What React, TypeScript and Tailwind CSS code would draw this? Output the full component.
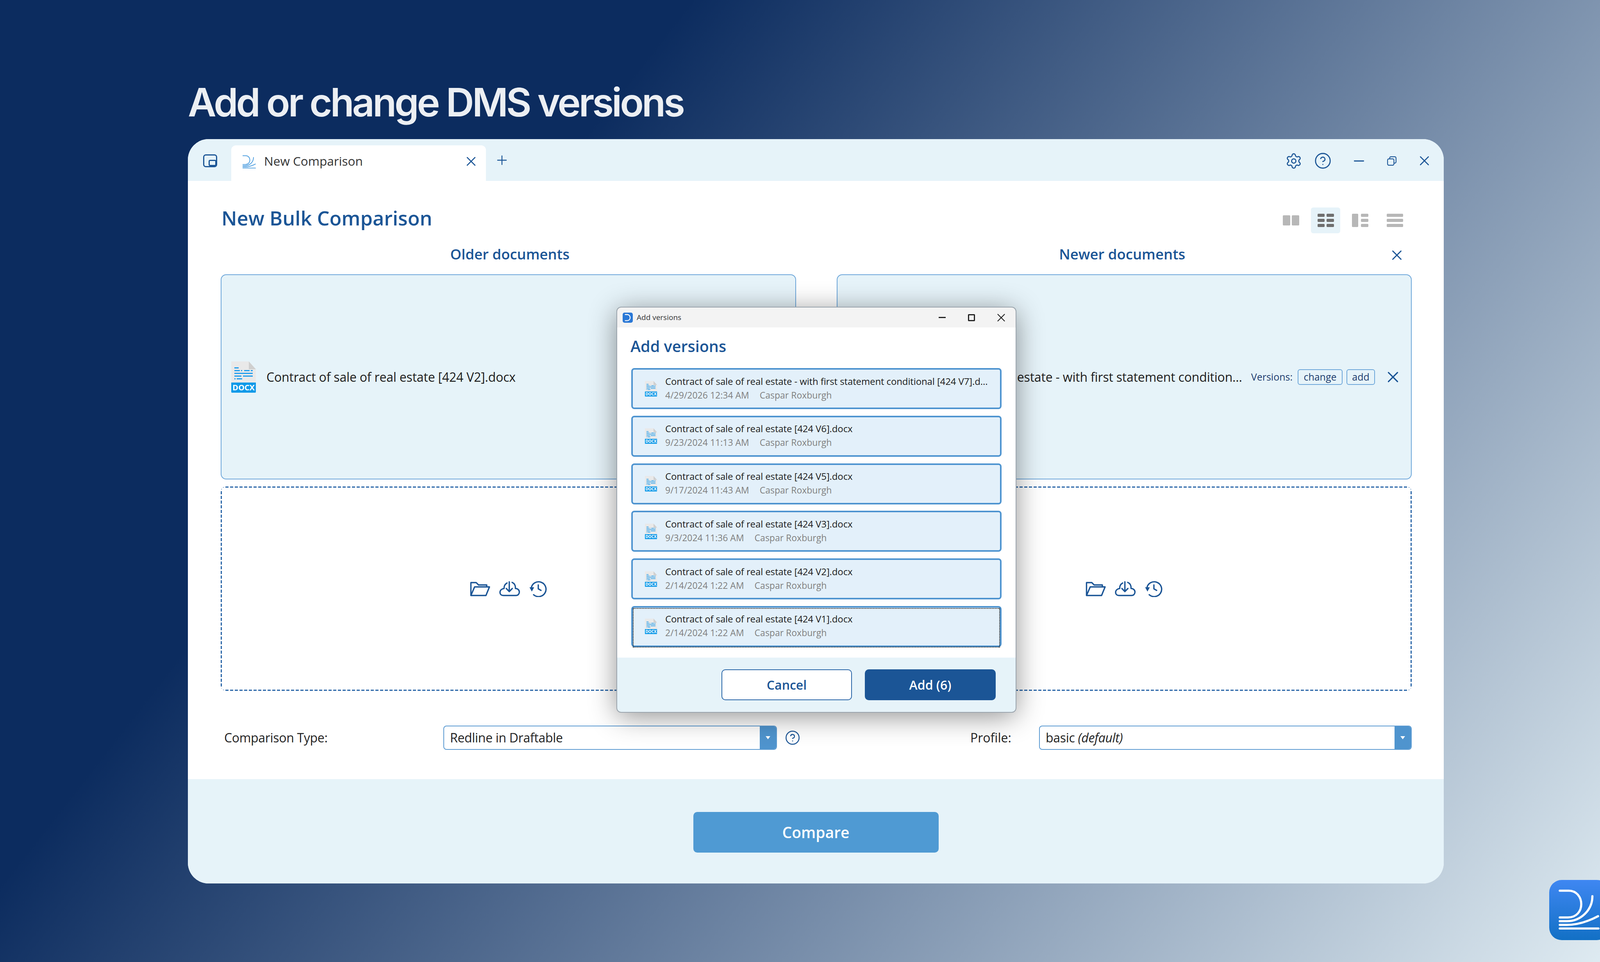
import { CircleHelp, Minus, Plus, Settings, X } from "lucide-react";

const versions = [
  { name: "Contract of sale of real estate - with first statement conditional [424 V7].d...", date: "4/29/2026 12:34 AM" },
  { name: "Contract of sale of real estate [424 V6].docx", date: "9/23/2024 11:13 AM" },
  { name: "Contract of sale of real estate [424 V5].docx", date: "9/17/2024 11:43 AM" },
  { name: "Contract of sale of real estate [424 V3].docx", date: "9/3/2024 11:36 AM" },
  { name: "Contract of sale of real estate [424 V2].docx", date: "2/14/2024 1:22 AM" },
  { name: "Contract of sale of real estate [424 V1].docx", date: "2/14/2024 1:22 AM" },
];

const dashedBox =
  "flex h-[523px] items-center justify-center rounded-[14px] [background-image:linear-gradient(90deg,#2a66a8_8px,transparent_8px),linear-gradient(90deg,#2a66a8_8px,transparent_8px),linear-gradient(#2a66a8_8px,transparent_8px),linear-gradient(#2a66a8_8px,transparent_8px)] [background-size:12px_3px,12px_3px,3px_12px,3px_12px] [background-position:0_0,0_100%,0_0,100%_0] [background-repeat:repeat-x,repeat-x,repeat-y,repeat-y]";

function DocxIcon({ className }: { className: string }) {
  return (
    <svg viewBox="0 0 63 80" className={className}>
      <path d="M0 0H45L63 20V56H0Z" fill="#e9e9e9" />
      <path d="M45 0L63 20H45Z" fill="#cfcfcf" />
      <g fill="#1f9ded">
        <rect x="8" y="15" width="11" height="3" />
        <rect x="8" y="22" width="14" height="3" />
        <rect x="25" y="22" width="3" height="3" />
        <rect x="33" y="22" width="14" height="3" />
        <rect x="50" y="22" width="5" height="3" />
        <rect x="8" y="29" width="47" height="3" />
        <rect x="8" y="36" width="18" height="3" />
        <rect x="30" y="36" width="25" height="3" />
        <rect x="8" y="43" width="3" height="3" />
        <rect x="14" y="43" width="14" height="3" />
      </g>
      <path d="M0 54H63V78a2 2 0 0 1-2 2H2a2 2 0 0 1-2-2Z" fill="#0f9ae9" />
      <text x="31.5" y="74" textAnchor="middle" fontSize="20" fontWeight="700" fill="#fff" fontFamily="Open Sans, sans-serif">
        DOCX
      </text>
    </svg>
  );
}

function DropIcons() {
  return (
    <div className="flex items-center gap-[23px] text-[#1b5596]">
      <svg viewBox="0 0 52 38" fill="none" stroke="currentColor" strokeWidth="3.4" strokeLinejoin="round" className="h-[38px] w-[52px]">
        <path d="M2.5 36V3H16L22 9H43V14" />
        <path d="M2.5 36L12 14H50L41 36Z" />
      </svg>
      <svg viewBox="0 0 54 39" fill="none" stroke="currentColor" strokeWidth="3.4" strokeLinecap="round" strokeLinejoin="round" className="h-[39px] w-[54px]">
        <path d="M20 5C15 8 12 13 12.5 19C6 20 2 24 2 29C2 34 6 37 11 37H43C48 37 51.5 33 51.5 28C51.5 23 47 19 41.5 19C42 12 39 6 33 3.5" />
        <path d="M25.7 2V27M18 19L25.7 27L33.5 19" />
      </svg>
      <svg viewBox="0 0 45 42" fill="none" stroke="currentColor" strokeWidth="3.4" strokeLinecap="round" strokeLinejoin="round" className="h-[42px] w-[45px]">
        <path d="M5 19A19 19 0 1 1 11 36" />
        <path d="M0.5 17H12.5L6.5 28Z" fill="currentColor" stroke="none" />
        <path d="M23 11V21L30 25" />
      </svg>
    </div>
  );
}

function LogoStrokes({ color, width }: { color: string; width: number }) {
  return (
    <g fill="none" stroke={color} strokeWidth={width} strokeLinecap="round">
      <path d="M27 27.5H50C70 27.5 82 44 82 62C82 80 70 96 48 96H27" />
      <path d="M110.5 41.5C110.5 78 80 105.6 45 105.6H27" />
      <path d="M125 92.7C100 106 72 115 45 115H27" />
      <path d="M27 124.3H126" />
    </g>
  );
}

function LayoutButton({ active, children }: { active?: boolean; children: React.ReactNode }) {
  return (
    <div className={`flex h-[66px] w-[75px] items-center justify-center rounded-[6px] ${active ? "bg-[#e6f3f9]" : ""}`}>
      <div className="flex h-[34px] w-[42px] items-center">{children}</div>
    </div>
  );
}

function SelectBox({ width, children }: { width: string; children: React.ReactNode }) {
  return (
    <div className={`flex h-[62px] items-stretch overflow-hidden rounded-[8px] border-2 border-[#5c9bd2] bg-white ${width}`}>
      <div className="flex flex-1 items-center pl-[15px] text-[32px] tracking-[-0.01em] text-[#222]">{children}</div>
      <div className="flex w-[42px] items-center justify-center bg-[#4f94ce]">
        <div className="h-0 w-0 border-x-[6px] border-t-[8px] border-x-transparent border-t-white" />
      </div>
    </div>
  );
}

export default function App() {
  return (
    <div className="flex h-[2462px] w-[4176px] flex-col overflow-hidden bg-[linear-gradient(128deg,#0c2c5f_29%,#e2eef4_100%)] pl-[481px] font-['Open_Sans',sans-serif]">
      <h1 className="mt-[192px] h-[133px] font-['Inter',sans-serif] text-[100px] leading-[140px] font-semibold tracking-[-0.051em] text-[#eceff3]">
        Add or change DMS versions
      </h1>

      <div className="relative mt-[31px] flex h-[1905px] w-[3215px] flex-col overflow-hidden rounded-[53px] bg-white">
        {/* tab strip */}
        <div className="flex h-[107px] shrink-0 items-start bg-[#e6f3f9]">
          <div className="mt-[39px] ml-[39px] h-[33px] w-[36px] rounded-[7px] border-[3px] border-[#1b5596]">
            <div className="mt-[11px] ml-[11px] h-[16px] w-[20px] rounded-[4px] border-[3px] border-[#1b5596]" />
          </div>
          <div className="mt-[16px] ml-[36px] flex h-[91px] w-[652px] items-start rounded-t-[12px] bg-white pt-[21px] pl-[29px]">
            <svg viewBox="27 20 100 110" className="mt-[3px] h-[36px] w-[34px]">
              <LogoStrokes color="#4f9fe0" width={6} />
            </svg>
            <span className="ml-[21px] text-[31.5px] leading-[38px] text-[#333]">New Comparison</span>
            <X className="mr-[18px] ml-auto h-[40px] w-[40px] text-[#1b5596]" strokeWidth={1.5} />
          </div>
          <Plus className="mt-[35px] ml-[22px] h-[38px] w-[38px] text-[#1b5596]" strokeWidth={1.5} />
          <div className="mt-[33px] ml-auto flex items-center pr-[29px] text-[#1b5596]">
            <Settings className="h-[44px] w-[44px]" strokeWidth={1.5} />
            <CircleHelp className="ml-[30px] h-[45px] w-[45px]" strokeWidth={1.5} />
            <Minus className="ml-[50px] h-[40px] w-[40px]" strokeWidth={1.7} />
            <svg viewBox="0 0 24 24" fill="none" stroke="currentColor" strokeWidth="2" className="ml-[51px] h-[26px] w-[26px]">
              <rect x="2" y="7" width="15" height="15" rx="3" />
              <path d="M7 7V5a3 3 0 0 1 3-3h9a3 3 0 0 1 3 3v9a3 3 0 0 1-3 3h-2" />
            </svg>
            <X className="ml-[50px] h-[41px] w-[41px]" strokeWidth={1.5} />
          </div>
        </div>

        {/* body */}
        <div className="flex flex-1 flex-col pt-[68px]">
          <div className="flex h-[66px] items-center pr-[88px] pl-[86px]">
            <h2 className="-mt-[12px] text-[50.5px] leading-none font-[550] text-[#1b5596]">New Bulk Comparison</h2>
            <div className="ml-auto flex gap-[13.5px]">
              <LayoutButton>
                <div className="flex h-[26px] w-full gap-[4px]">
                  <div className="flex-1 rounded-[2px] bg-[#b7b7b7]" />
                  <div className="flex-1 rounded-[2px] bg-[#b7b7b7]" />
                </div>
              </LayoutButton>
              <LayoutButton active>
                <div className="grid h-full w-full grid-cols-2 grid-rows-3 gap-x-[5px] gap-y-[5px]">
                  {[0, 1, 2, 3, 4, 5].map((i) => (
                    <div key={i} className="rounded-[2px] bg-[#6f6f6f]" />
                  ))}
                </div>
              </LayoutButton>
              <LayoutButton>
                <div className="flex h-full w-full gap-[7px]">
                  <div className="w-[16px] rounded-[2px] bg-[#b7b7b7]" />
                  <div className="grid flex-1 grid-rows-3 gap-[5px]">
                    {[0, 1, 2].map((i) => (
                      <div key={i} className="rounded-[2px] bg-[#b7b7b7]" />
                    ))}
                  </div>
                </div>
              </LayoutButton>
              <LayoutButton>
                <div className="grid h-full w-full grid-rows-3 gap-[5px]">
                  {[0, 1, 2].map((i) => (
                    <div key={i} className="rounded-[2px] bg-[#b7b7b7]" />
                  ))}
                </div>
              </LayoutButton>
            </div>
          </div>

          <div className="mt-[28px] mr-[82px] ml-[84px] grid grid-cols-2 gap-x-[104px]">
            <div className="flex h-[50px] items-center justify-center pl-[8px] text-[36.5px] font-[550] text-[#1b5596]">
              Older documents
            </div>
            <div className="relative flex h-[50px] items-center justify-center pr-[10px] text-[36.5px] font-[550] text-[#1b5596]">
              Newer documents
              <X className="absolute top-[7px] right-[17px] h-[42px] w-[42px]" strokeWidth={1.7} />
            </div>

            <div className="mt-[27px] flex h-[525px] items-center rounded-[14px] border-2 border-[#6ea7da] bg-[#e6f3f9] pl-[25px]">
              <DocxIcon className="h-[80px] w-[63px]" />
              <span className="ml-[27px] text-[32px] tracking-[-0.006em] whitespace-nowrap text-[#1c1c1c]">
                Contract of sale of real estate [424 V2].docx
              </span>
            </div>
            <div className="mt-[27px] flex h-[525px] items-center justify-end rounded-[14px] border-2 border-[#6ea7da] bg-[#e6f3f9] pr-[23px]">
              <span className="text-[32px] tracking-[-0.006em] whitespace-nowrap text-[#1c1c1c]">
                estate - with first statement condition...
              </span>
              <span className="ml-[23px] text-[25px] text-[#1c3c6e]">Versions:</span>
              <div className="ml-[13px] flex h-[40px] w-[115px] items-center justify-center rounded-[6px] border-2 border-[#6ea7da] text-[25px] text-[#1c3c6e]">
                change
              </div>
              <div className="ml-[10px] flex h-[40px] w-[73px] items-center justify-center rounded-[6px] border-2 border-[#6ea7da] text-[25px] text-[#1c3c6e]">
                add
              </div>
              <X className="ml-[23px] h-[46px] w-[46px] text-[#1b5596]" strokeWidth={1.7} />
            </div>

            <div className={`mt-[18px] ${dashedBox}`}>
              <DropIcons />
            </div>
            <div className={`mt-[18px] ${dashedBox}`}>
              <DropIcons />
            </div>
          </div>

          <div className="mt-[89px] flex h-[62px] items-center pl-[93px]">
            <span className="w-[561px] text-[32px] tracking-[-0.01em] text-[#222]">Comparison Type:</span>
            <SelectBox width="w-[854px]">Redline in Draftable</SelectBox>
            <CircleHelp className="ml-[20px] h-[40px] w-[40px] text-[#1b5596]" strokeWidth={1.5} />
            <span className="ml-[435px] w-[176px] text-[32px] text-[#222]">Profile:</span>
            <SelectBox width="w-[954px]">
              basic&nbsp;<em>(default)</em>
            </SelectBox>
          </div>
        </div>

        {/* compare bar */}
        <div className="flex h-[267px] shrink-0 items-start justify-center bg-[#e6f3f9] pt-[84px]">
          <div className="flex h-[104px] w-[628px] items-center justify-center rounded-[10px] bg-[#4f9ad3] text-[39px] font-semibold text-white">
            Compare
          </div>
        </div>

        {/* add versions dialog */}
        <div className="absolute top-[431px] left-[1099px] flex h-[1035px] w-[1020px] flex-col overflow-hidden rounded-[10px] bg-white shadow-[0_10px_70px_rgba(0,0,0,0.45)] outline-2 outline-[#9aa4ad]">
          <div className="flex h-[51px] shrink-0 items-center bg-[#f3f3f3] pl-[14px]">
            <div className="flex h-[26px] w-[26px] items-center justify-center rounded-[5px] bg-[#2a78d6]">
              <svg viewBox="20 20 70 85" className="h-[20px] w-[16px]">
                <path d="M27 27.5H50C70 27.5 82 44 82 62C82 80 70 96 48 96H27" fill="none" stroke="#fff" strokeWidth="10" strokeLinecap="round" />
              </svg>
            </div>
            <span className="ml-[10px] text-[19px] text-[#333]">Add versions</span>
            <div className="ml-auto flex items-center pr-[20px] text-[#222]">
              <div className="h-[3px] w-[18px] bg-[#222]" />
              <div className="ml-[57px] h-[18px] w-[18px] rounded-[2px] border-[3px] border-[#222]" />
              <X className="ml-[50px] h-[34px] w-[34px]" strokeWidth={1.6} />
            </div>
          </div>

          <div className="flex h-[104px] shrink-0 items-start pt-[19px] pl-[34px] text-[39.5px] font-[550] text-[#1b5596]">
            Add versions
          </div>

          <div className="flex flex-col gap-[16.8px] px-[36px]">
            {versions.map((v, i) => (
              <div
                key={v.name}
                className="relative flex h-[105px] items-center rounded-[8px] border-[4px] border-[#4e94d0] bg-[#e3f0fa] pl-[31px]"
              >
                {i === 5 && <div className="absolute inset-x-0 top-[1px] -bottom-[5px] border-2 border-dotted border-black" />}
                <DocxIcon className="h-[40px] w-[31px] shrink-0" />
                <div className="ml-[21px] min-w-0 pb-[4px] whitespace-nowrap">
                  <div className="text-[24px] leading-[36px] tracking-[-0.005em] text-[#1c1c1c]">{v.name}</div>
                  <div className="flex gap-[27px] text-[23px] leading-[34px] text-[#7f7f7f]">
                    <span>{v.date}</span>
                    <span>Caspar Roxburgh</span>
                  </div>
                </div>
              </div>
            ))}
          </div>

          <div className="mt-auto flex h-[139px] shrink-0 justify-end gap-[33px] bg-[#e6f3f9] pt-[30px] pr-[51px]">
            <div className="flex h-[79px] w-[334px] items-center justify-center rounded-[10px] border-2 border-[#2a66a8] bg-white text-[32px] font-semibold text-[#1b5596]">
              Cancel
            </div>
            <div className="flex h-[79px] w-[335px] items-center justify-center rounded-[10px] bg-[#1b5596] text-[32px] font-semibold text-white">
              Add (6)
            </div>
          </div>
        </div>
      </div>

      {/* app badge */}
      <svg viewBox="0 0 154 154" className="absolute top-[2252px] left-[3966px] h-[154px] w-[154px]">
        <defs>
          <linearGradient id="badge" x1="0" y1="0" x2="0" y2="1">
            <stop offset="0" stopColor="#3f87f2" />
            <stop offset="1" stopColor="#1270c5" />
          </linearGradient>
        </defs>
        <rect width="154" height="154" rx="32" fill="url(#badge)" />
        <LogoStrokes color="#fff" width={5.5} />
      </svg>
    </div>
  );
}
